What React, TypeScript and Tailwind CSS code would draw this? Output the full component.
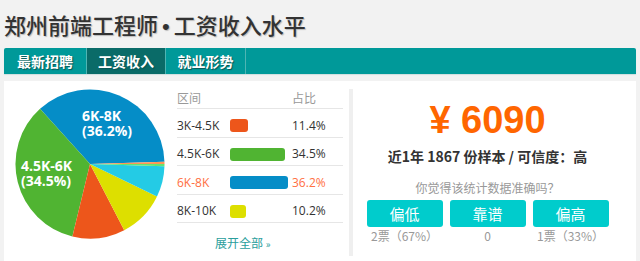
import React from 'react';

const CJK = '"Noto Sans CJK SC", "Liberation Sans", sans-serif';

interface Slice {
  label: string;
  pct: number;
  color: string;
}

// counter-clockwise from a little above east
const slices: Slice[] = [
  { label: '6K-8K', pct: 36.2, color: '#058DC7' },
  { label: '4.5K-6K', pct: 34.5, color: '#50B432' },
  { label: '3K-4.5K', pct: 11.4, color: '#ED561B' },
  { label: '8K-10K', pct: 10.2, color: '#DDDF00' },
  { label: '10K-15K', pct: 6.7, color: '#24CBE5' },
  { label: '15K-20K', pct: 0.5, color: '#64E572' },
  { label: '20K+', pct: 0.5, color: '#FF9655' },
];

const rows = [
  { range: '3K-4.5K', pct: '11.4%', w: 18, color: '#ED561B', hot: false },
  { range: '4.5K-6K', pct: '34.5%', w: 55, color: '#50B432', hot: false },
  { range: '6K-8K', pct: '36.2%', w: 58, color: '#058DC7', hot: true },
  { range: '8K-10K', pct: '10.2%', w: 16, color: '#DDDF00', hot: false },
];

const votes = [
  { label: '偏低', count: '2票（67%）' },
  { label: '靠谱', count: '0' },
  { label: '偏高', count: '1票（33%）' },
];

const Pie: React.FC = () => {
  const cx = 75;
  const cy = 75;
  const r = 74.5;
  let a = 1.8;
  const pt = (deg: number) => {
    const t = (deg * Math.PI) / 180;
    return `${(cx + r * Math.cos(t)).toFixed(2)} ${(cy - r * Math.sin(t)).toFixed(2)}`;
  };
  return (
    <svg width="150" height="150" viewBox="0 0 150 150" className="shrink-0">
      {slices.map((s) => {
        const start = a;
        const end = a + (s.pct / 100) * 360;
        a = end;
        const large = end - start > 180 ? 1 : 0;
        return (
          <path
            key={s.label}
            d={`M ${cx} ${cy} L ${pt(start)} A ${r} ${r} 0 ${large} 0 ${pt(end)} Z`}
            fill={s.color}
          />
        );
      })}
      <g fill="#fff" fontFamily='"Open Sans", sans-serif' fontWeight="700" fontSize="14">
        <text x="67" y="32">
          <tspan x="67">6K-8K</tspan>
          <tspan x="67" dy="15">(36.2%)</tspan>
        </text>
        <text x="6" y="82">
          <tspan x="6">4.5K-6K</tspan>
          <tspan x="6" dy="15">(34.5%)</tspan>
        </text>
      </g>
    </svg>
  );
};

export default function App() {
  return (
    <div className="min-h-[261px] w-[640px] overflow-hidden bg-[#f2f2f2]" style={{ fontFamily: CJK }}>
      <h1 className="pl-[4px] pt-[9px] text-[22px] leading-[30px] font-medium text-[#333] [text-shadow:1px_1px_1px_#bbb]">
        郑州前端工程师
        <span className="mx-[4px]" style={{ fontFamily: '"Liberation Sans", sans-serif' }}>
          •
        </span>
        工资收入水平
      </h1>

      <div className="mx-[4px] mt-[6px] flex h-[26px] rounded-t-[2px] bg-[#009999] shadow-[0_1px_1px_#cfdede]">
        {['最新招聘', '工资收入', '就业形势'].map((t, i) => (
          <div
            key={t}
            className={`flex items-center justify-center border-r border-[#4fb5b3] text-[14px] font-bold text-white [text-shadow:1px_1px_1px_#0b5553] ${
              i === 1 ? 'w-[79px] bg-[#0a6b68]' : i === 0 ? 'w-[83px] rounded-tl-[2px]' : 'w-[80px]'
            }`}
          >
            {t}
          </div>
        ))}
      </div>

      <div className="mx-[4px] mt-[7px] flex h-[183px] bg-white">
        {/* left: chart + table */}
        <div className="flex w-[345px] pl-[11px] pt-[8px]">
          <Pie />
          <div className="ml-[12px] w-[166px]">
            <div className="box-border flex h-[20px] border-b border-[#e6e6e6] pt-[1px] text-[12px] leading-[16px] text-[#999]">
              <span className="w-[115px]">区间</span>
              <span>占比</span>
            </div>
            {rows.map((r) => (
              <div
                key={r.range}
                className={`box-border flex h-[28.5px] items-center border-b border-[#e6e6e6] pt-[6px] text-[12px] ${
                  r.hot ? 'text-[#ff7043]' : 'text-[#333]'
                }`}
                style={{ fontFamily: '"Open Sans", sans-serif' }}
              >
                <span className="w-[53px]">{r.range}</span>
                <span className="w-[62px]">
                  <span className="block h-[13px] rounded-[3px]" style={{ width: r.w, background: r.color }} />
                </span>
                <span>{r.pct}</span>
              </div>
            ))}
            <div className="pt-[12px] pl-[38px] text-[12px] leading-[16px] text-[#2a9e9c]">
              展开全部 <span className="text-[10px]">»</span>
            </div>
          </div>
        </div>

        {/* right: average + votes */}
        <div className="my-[8px] w-[4px] bg-[#efefef]" />
        <div className="flex flex-1 flex-col items-center pr-[14px] pt-[19px]">
          <div
            className="text-[38px] font-bold leading-[40px] text-[#ff6600]"
            style={{ fontFamily: '"Liberation Sans", sans-serif' }}
          >
            ¥ 6090
          </div>
          <div className="mt-[7px] text-[14px] font-bold leading-[18px] text-[#333]">
            近1年 1867 份样本 / 可信度：高
          </div>
          <div className="mt-[15px] text-[12px] leading-[16px] text-[#999]">你觉得该统计数据准确吗？</div>
          <div className="mt-[4px] flex gap-[7px]">
            {votes.map((v) => (
              <div key={v.label} className="flex w-[76px] flex-col items-center">
                <button className="h-[27px] w-[76px] rounded-[3px] bg-[#00cccc] text-[15px] leading-[27px] text-white">
                  {v.label}
                </button>
                <span className="mt-[2px] text-[12px] leading-[14px] text-[#999]">{v.count}</span>
              </div>
            ))}
          </div>
        </div>
      </div>
    </div>
  );
}
